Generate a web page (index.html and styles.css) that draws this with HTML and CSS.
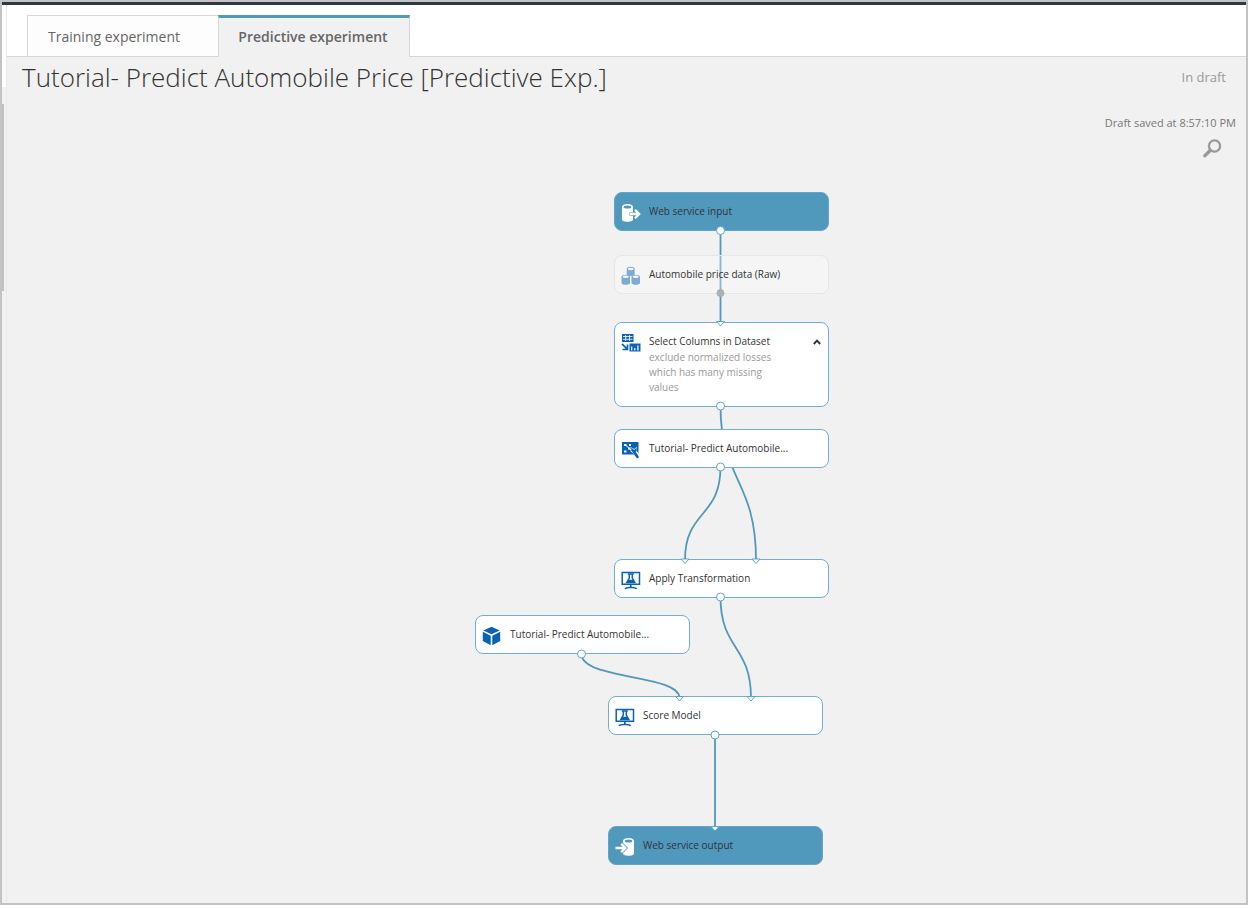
FILE: index.html
```
<!DOCTYPE html>
<html lang="en">
<head>
<meta charset="utf-8">
<title>Tutorial- Predict Automobile Price [Predictive Exp.]</title>
<link rel="stylesheet" href="styles.css">
</head>
<body>
<div class="frame">
  <div class="topbar"></div>
  <div class="body">
    <aside class="rail"><div class="rail-head"></div><div class="rail-thumb"></div></aside>
    <main class="main">
      <nav class="tabs">
        <button class="tab" type="button">Training experiment</button>
        <button class="tab tab-active" type="button">Predictive experiment</button>
      </nav>
      <header class="header">
        <h1 class="title">Tutorial- Predict Automobile Price [Predictive Exp.]</h1>
        <span class="state">In draft</span>
      </header>
      <div class="status">
        <span class="saved">Draft saved at 8:57:10 PM</span>
        <button class="search" type="button" aria-label="Search">
          <svg width="20" height="20" viewBox="0 0 20 20"><circle cx="12.500" cy="7" r="5.600" fill="none" stroke="#999" stroke-width="2.300"/><path d="M8.400 11.300L2.800 16.800" stroke="#999" stroke-width="3.300" stroke-linecap="round"/></svg>
        </button>
      </div>
      <section class="canvas" aria-label="Experiment canvas">
        <svg class="layer wires" width="850" height="720" viewBox="7 165 850 720">
          <path d="M720.500 230V322"/>
          <path d="M720.500 406C720.500 480 756 480 756 560"/>
          <path d="M720.500 467C720.500 518 685 510 685 560"/>
          <path d="M720.500 597C720.500 650 751 645 751 698"/>
          <path d="M581.500 654C581.500 680 679.500 674 679.500 698"/>
          <path d="M715 735V827"/>
        </svg>

        <article class="node node-service at-input">
          <svg class="icon" width="20" height="20" viewBox="0 0 20 20"><path d="M1 4v12.500c0 3 11 3 11 0V4c0-4-11-4-11 0z" fill="#fff"/><ellipse cx="6.500" cy="3.900" rx="3.800" ry="1.500" fill="#5099bd"/><path d="M8.500 11h9M14 6.800l4.200 4.200-4.200 4.200" fill="none" stroke="#5099bd" stroke-width="3.400"/><path d="M9 11h9M14 6.800l4.200 4.200-4.200 4.200" fill="none" stroke="#fff" stroke-width="2.300"/></svg>
          <h2 class="name">Web service input</h2>
        </article>

        <article class="node node-muted at-raw">
          <svg class="icon" width="20" height="20" viewBox="0 0 20 20"><g fill="#7dabd3"><path d="M5.700 3v5.500c0 2 8 2 8 0V3c0-3-8-3-8 0z"/><path d="M.5 11v6c0 2.400 8.500 2.400 8.500 0v-6c0-3-8.500-3-8.500 0zM10.500 11v6c0 2.400 8.500 2.400 8.500 0v-6c0-3-8.500-3-8.500 0z"/></g><g fill="#f5f5f5"><ellipse cx="9.700" cy="3" rx="2.900" ry="1.200"/><ellipse cx="4.750" cy="10.800" rx="3" ry="1.300"/><ellipse cx="14.750" cy="10.800" rx="3" ry="1.300"/></g></svg>
          <h2 class="name">Automobile price data (Raw)</h2>
        </article>

        <article class="node at-select">
          <svg class="icon" width="20" height="20" viewBox="0 0 20 20"><path d="M1 1h11.500v8H1z" fill="#0a62b5"/><path d="M2 3.500h9.500M2 6.300h9.500M4.700 2v6M8.500 2v6" stroke="#fff" stroke-width=".8"/><path d="M1 10.800l5 5M6.500 11.500v5h-5" fill="none" stroke="#0a62b5" stroke-width="1.700"/><path d="M8.500 10.500h11v8h-11z" fill="#0a62b5"/><path d="M10.700 17.500v-4M13.800 17.500v-2.500M16.900 17.500v-5" stroke="#fff" stroke-width="1.200"/></svg>
          <div class="text">
            <h2 class="name">Select Columns in Dataset</h2>
            <p class="note">exclude normalized losses which has many missing values</p>
          </div>
          <button class="toggle" type="button" aria-label="Collapse comment"><svg width="8" height="6" viewBox="0 0 8 6"><path d="M.8 5L4 1.700 7.200 5" fill="none" stroke="#333" stroke-width="1.900"/></svg></button>
        </article>

        <article class="node at-transform">
          <svg class="icon" width="20" height="20" viewBox="0 0 20 20"><path d="M1 2h16.500v12.500H1z" fill="#0a62b5"/><path d="M3 4h2.500v2H3zM8 4h2v2H8zM3 10.500h2.500v2H3zM7 7.500h2v2H7z" fill="#fff"/><path d="M5 5.500l5 4.500" stroke="#fff" stroke-width="1"/><path d="M9.500 7v4.500l3 2 3 5h4v-3l-3.500-4V7l-3 2z" fill="#fff"/><path d="M12.800 11.500l3.700 5.500" stroke="#0a62b5" stroke-width="2.600" stroke-linecap="round"/><path d="M10.300 7.500v3.300l2.500 2 2.900-1.500V7.500l-2.700 2.600z" fill="#0a62b5"/></svg>
          <h2 class="name">Tutorial- Predict Automobile...</h2>
        </article>

        <article class="node at-apply">
          <svg class="icon" width="20" height="20" viewBox="0 0 20 20"><path d="M1.200 2.500h17.300v11.700H1.200z" fill="#fff" stroke="#0a62b5" stroke-width="1.500"/><path d="M6.800 4h6M8.300 4v4L5.800 12.400h8L11.300 8V4" fill="none" stroke="#0a62b5" stroke-width="1.500"/><path d="M7.300 9.800h5l1.500 2.800h-8z" fill="#0a62b5"/><path d="M9.800 14v4M4 18.900c1-1.600 3.500-1.400 5.800-1.400s4.800-.2 5.800 1.400" fill="none" stroke="#0a62b5" stroke-width="1.600"/></svg>
          <h2 class="name">Apply Transformation</h2>
        </article>

        <article class="node at-model">
          <svg class="icon" width="20" height="20" viewBox="0 0 20 20"><path d="M9.500.8l8.200 3.600-8.200 3.900-8.200-3.900zM.8 5.800l7.900 3.900v9.600L.8 15zM18.200 5.800l-7.900 3.900v9.600l7.900-4.300z" fill="#0a62b5"/></svg>
          <h2 class="name">Tutorial- Predict Automobile...</h2>
        </article>

        <article class="node at-score">
          <svg class="icon" width="20" height="20" viewBox="0 0 20 20"><path d="M1.200 2.500h17.300v11.700H1.200z" fill="#fff" stroke="#0a62b5" stroke-width="1.500"/><path d="M6.800 4h6M8.300 4v4L5.800 12.400h8L11.300 8V4" fill="none" stroke="#0a62b5" stroke-width="1.500"/><path d="M7.300 9.800h5l1.500 2.800h-8z" fill="#0a62b5"/><path d="M9.800 14v4M4 18.900c1-1.600 3.500-1.400 5.800-1.400s4.800-.2 5.800 1.400" fill="none" stroke="#0a62b5" stroke-width="1.600"/></svg>
          <h2 class="name">Score Model</h2>
        </article>

        <article class="node node-service at-output">
          <svg class="icon" width="20" height="20" viewBox="0 0 20 20"><path d="M8 4v12.500c0 3 11 3 11 0V4c0-4-11-4-11 0z" fill="#fff"/><ellipse cx="13.500" cy="3.900" rx="3.800" ry="1.500" fill="#5099bd"/><path d="M1 11h9.500M6.500 6.800l4.200 4.200-4.200 4.200" fill="none" stroke="#5099bd" stroke-width="3.400"/><path d="M.5 11h9.500M6.200 6.800l4.200 4.200-4.200 4.200" fill="none" stroke="#fff" stroke-width="2.300"/></svg>
          <h2 class="name">Web service output</h2>
        </article>

        <svg class="layer ports" width="850" height="720" viewBox="7 165 850 720">
          <circle cx="720.500" cy="230.500" r="4"/>
          <circle class="port-muted" cx="720.500" cy="293" r="3.500"/>
          <circle cx="720.500" cy="406" r="4"/>
          <circle cx="720.500" cy="467" r="4"/>
          <circle cx="720.500" cy="597" r="4"/>
          <circle cx="581.500" cy="654" r="4"/>
          <circle cx="715" cy="735" r="4"/>
          <path d="M716.500 321.500h8l-4 4.500z"/>
          <path d="M681 559h8l-4 4.500z"/>
          <path d="M752 559h8l-4 4.500z"/>
          <path d="M675.500 696.500h8l-4 4.500z"/>
          <path d="M747 696.500h8l-4 4.500z"/>
          <path d="M711 826.500h8l-4 4.500z"/>
        </svg>
      </section>
    </main>
  </div>
</div>
</body>
</html>
```
FILE: styles.css
```
* { box-sizing: border-box; }
body {
  margin: 0;
  font-family: "Open Sans", "Noto Sans", sans-serif;
  color: #333;
}
h1, h2, p { margin: 0; font-weight: 400; }
button { font: inherit; border: 0; background: none; padding: 0; margin: 0; }

.frame {
  min-height: 100vh;
  display: flex;
  flex-direction: column;
  border: 2px solid #c3c3c3;
  background: #f1f1f1;
}
.topbar { height: 3px; background: #2f3943; }
.body { flex: 1; display: flex; }

.rail { width: 5px; border-right: 1px solid #e9e9e9; }
.rail-head { height: 82px; margin-bottom: 17px; background: #fff; }
.rail-thumb { width: 2px; height: 187px; background: #c1c1c1; }

.main { flex: 1; min-width: 0; display: flex; flex-direction: column; }
.tabs {
  display: flex;
  height: 52px;
  padding: 10px 0 0 20px;
  background: #fff;
  border-bottom: 1px solid #d6d6d6;
}
.tab {
  width: 191px;
  height: 42px;
  padding-right: 18px;
  border: 1px solid #d6d6d6;
  border-right: 0;
  background: #fdfdfd;
  color: #666;
  font-size: 14px;
}
.tab-active {
  width: 192px;
  padding: 0 2px 2px 0;
  border-top: 3px solid #5099bd;
  border-right: 1px solid #d6d6d6;
  border-bottom: 0;
  background: #f1f1f1;
  font-weight: 600;
}

.header {
  display: flex;
  justify-content: space-between;
  align-items: center;
  height: 40px;
  padding: 0 20px 0 15px;
}
.title { font-size: 26px; font-weight: 300; white-space: nowrap; }
.state { font-size: 13px; color: #999; }

.status {
  display: flex;
  flex-direction: column;
  align-items: flex-end;
  gap: 8px;
  height: 68px;
  padding: 18px 10px 0 0;
}
.saved { font-size: 11px; line-height: 16px; color: #777; }
.search { width: 20px; height: 20px; margin-right: 14px; }
.search svg { display: block; }

.canvas { position: relative; flex: 1; min-height: 720px; }
.layer { position: absolute; top: 0; left: 0; pointer-events: none; }
.wires path { fill: none; stroke: #5099bd; stroke-width: 1.800; }
.ports circle, .ports path { fill: #fff; stroke: #5fa5c6; stroke-width: 1; }
.ports .port-muted { fill: #b0b0b0; stroke: #a4adb2; }

.node {
  position: absolute;
  width: 215px;
  min-height: 39px;
  display: flex;
  align-items: flex-start;
  padding: 10px 7px 7px 6px;
  border: 1px solid #6fb0ce;
  border-radius: 8px;
  background: #fff;
}
.node-service { background: #5099bd; border-color: #5fa7ca; }
.node-muted { background: rgba(255, 255, 255, 0.3); border-color: #e6e6e6; }
.icon { flex: none; margin-right: 8px; }
.text { width: 130px; }
.name { font-size: 10px; line-height: 17px; white-space: nowrap; }
.note { font-size: 10px; line-height: 15px; color: #999; }
.toggle { width: 8px; margin: 6px 0 0 auto; }
.toggle svg { display: block; }

.at-input { left: 607px; top: 27px; }
.at-raw { left: 607px; top: 90px; }
.at-select { left: 607px; top: 157px; min-height: 85px; }
.at-transform { left: 607px; top: 264px; }
.at-apply { left: 607px; top: 394px; }
.at-model { left: 468px; top: 450px; }
.at-score { left: 601px; top: 531px; }
.at-output { left: 601px; top: 661px; }
```
